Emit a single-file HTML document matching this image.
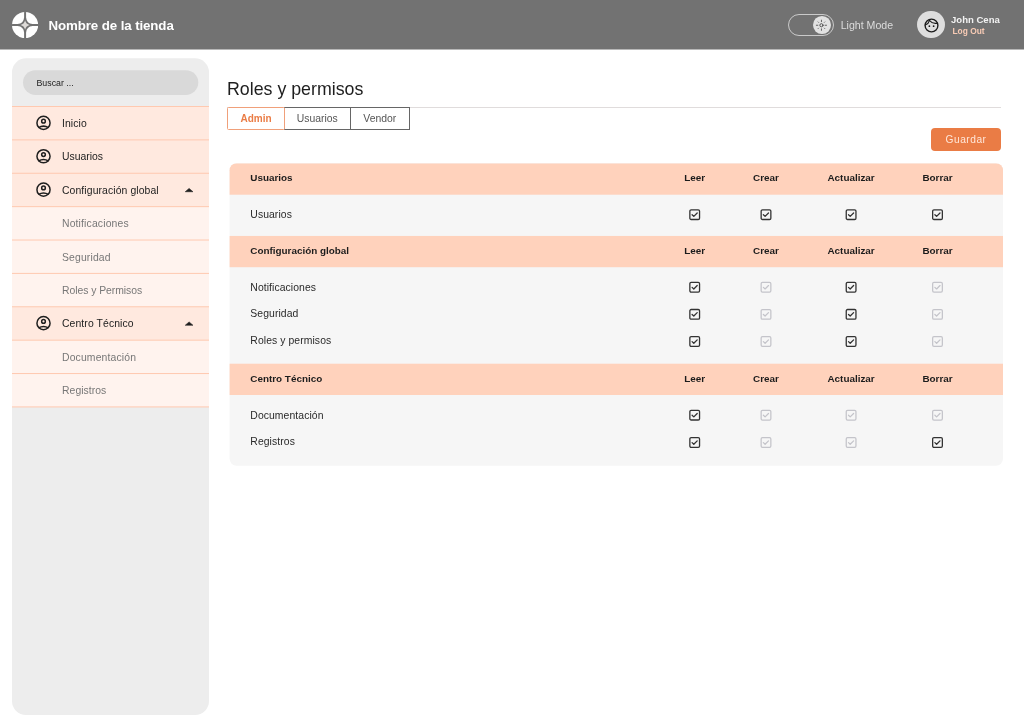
<!DOCTYPE html>
<html lang="es">
<head>
<meta charset="utf-8">
<title>Roles y permisos</title>
<style>
*{box-sizing:border-box;margin:0;padding:0}
html,body{width:1024px;height:728px;overflow:hidden;background:#fff}
body{font-family:"Liberation Sans",sans-serif;color:#222;position:relative}
.abs{position:absolute}
#root{position:absolute;left:0;top:0;width:1024px;height:728px;will-change:transform}
#hdr{position:absolute;left:0;top:0;width:1024px;height:49px;background:#727272;box-shadow:0 1px 0 #b8b8b8}
#logo{position:absolute;left:11.9px;top:11.9px;width:26.2px;height:26.2px}
#brand{position:absolute;left:48.5px;top:16.6px;font-size:13.3px;font-weight:bold;color:#fff;line-height:18px;white-space:nowrap;letter-spacing:-0.1px}
#toggle{position:absolute;left:788px;top:14px;width:46px;height:22.2px;border:1px solid #cacaca;border-radius:12px}
#knob{position:absolute;left:812.8px;top:16.05px;width:17.9px;height:17.9px;border-radius:50%;background:#e2e2e2}
#lm{position:absolute;left:840.7px;top:17px;font-size:10.6px;color:#dcdcdc;line-height:16px;white-space:nowrap}
#avatar{position:absolute;left:917.1px;top:10.7px;width:27.8px;height:27.8px;border-radius:50%;background:#dedede}
#uname{position:absolute;left:951px;top:12.5px;font-size:9.55px;font-weight:bold;color:#f2f2f2;line-height:13px;white-space:nowrap}
#logout{position:absolute;left:952.5px;top:25.5px;font-size:8.4px;font-weight:bold;color:#f8cbb5;line-height:11px;white-space:nowrap}
#side{position:absolute;left:12px;top:58px;width:197px;height:658px}
#search{position:absolute;left:11px;top:12px;width:175px;height:25px;font-size:8.8px;line-height:26.2px;padding-left:13.5px;color:#222}
.mi{position:absolute;left:0;width:197px;height:33.4px;font-size:10.4px;color:#222;letter-spacing:.1px}
.mi.sub{color:#777;letter-spacing:.15px}
.mi span{position:absolute;left:50px;top:.5px;line-height:33.4px;white-space:nowrap}
#title{position:absolute;left:227px;top:77.3px;font-size:17.8px;line-height:24px;color:#1e1e1e;white-space:nowrap}
#tline{position:absolute;left:227px;top:107px;width:773.5px;height:1px;background:#e0dcdc}
.tab{position:absolute;top:107px;height:23px;border:1px solid #666;background:#fff;font-size:10.4px;line-height:22.6px;text-align:center;color:#555}
#btn{position:absolute;left:931px;top:128px;width:69.5px;height:22.6px;border-radius:4px;background:#ea7c45;color:#ffe6d8;font-size:10.2px;line-height:23.6px;text-align:center;letter-spacing:.5px;padding-left:.5px}
#tbl{position:absolute;left:229px;top:163px;width:776px;height:304px}
.th{position:absolute;left:0;width:100%;height:0;font-weight:bold;font-size:9.9px;color:#1c1c1c}
.th b,.tr i{position:absolute;white-space:nowrap;font-style:normal}
.th b{top:-10.43px;line-height:14px}
.th .n{left:21.3px}
.c{transform:translateX(-50%)}
.tr{position:absolute;left:0;width:100%;height:0;font-size:10.4px;color:#2a2a2a;letter-spacing:.08px}
.tr i{left:21.3px;top:-7px;line-height:14px}
</style>
</head>
<body>
<div id="root">
<div id="hdr">
  <svg id="logo" viewBox="-13.1 -13.1 26.2 26.2">
    <defs><clipPath id="lc"><circle cx="0" cy="0" r="13.1"/></clipPath></defs>
    <circle cx="0" cy="0" r="13.1" fill="#fff"/>
    <path clip-path="url(#lc)" fill="#727272" d="M-1 -14 H1 V-7.5 Q1.5 -1.5 7.5 -1 H14 V1 H7.5 Q1.5 1.5 1 7.5 V14 H-1 V7.5 Q-1.5 1.5 -7.5 1 H-14 V-1 H-7.5 Q-1.5 -1.5 -1 -7.5Z"/>
    <path fill="#dedbd8" d="M0 -4.5 Q1 -1 4.5 0 Q1 1 0 4.5 Q-1 1 -4.5 0 Q-1 -1 0 -4.5Z"/>
  </svg>
  <div id="brand">Nombre de la tienda</div>
  <div id="toggle"></div>
  <div id="knob"></div>
  <svg class="abs" style="left:815px;top:19px;width:13px;height:13px" viewBox="0 0 13 13" fill="none" stroke="#444" stroke-width="0.8" stroke-linecap="round">
    <g transform="translate(6.45 6.25)">
    <circle cx="0" cy="0" r="1.6" stroke="#3c3c3c" stroke-width=".85"/>
    <path d="M0 -5.100v1.500M0 3.600v1.500M-5.100 0h1.500M3.600 0h1.500M-3.300 -3.300l.4 .4M2.900 2.900l.4 .4M-3.300 3.300l.4-.4M2.900 -2.900l.4-.4"/>
    </g>
  </svg>
  <div id="lm">Light Mode</div>
  <div id="avatar"></div>
  <svg class="abs" style="left:922.6px;top:16.8px;width:17px;height:17px" viewBox="0 0 24 24" fill="none" stroke="#1a1a1a" stroke-width="1.9" stroke-linecap="round">
    <circle cx="12" cy="12" r="9.05"/>
    <path d="M3.2 11.3C6.2 10.200 8.400 7.900 9.300 4.800" stroke-width="1.7"/>
    <path d="M9.600 5.300C11.800 8.200 15.400 9.700 20.300 8.800" stroke-width="1.7"/>
    <circle cx="9" cy="13" r="1.250" fill="#1a1a1a" stroke="none"/>
    <circle cx="15" cy="13" r="1.250" fill="#1a1a1a" stroke="none"/>
  </svg>
  <div id="uname">John Cena</div>
  <div id="logout">Log Out</div>
</div>
<div id="side">
  <svg class="abs" style="left:0;top:0;width:197px;height:658px" viewBox="0 0 197 658">
    <rect x="0" y=".3" width="197" height="656.8" rx="14" fill="#ededed"/>
    <rect x="11" y="12.200" width="175.300" height="24.800" rx="12.400" fill="#d9d9d9"/>
    <rect x="0" y="48.5" width="197" height="33.38" fill="#ffe9df"/>
    <rect x="0" y="81.88" width="197" height="33.38" fill="#ffe9df"/>
    <rect x="0" y="115.26" width="197" height="33.38" fill="#ffe9df"/>
    <rect x="0" y="148.64" width="197" height="33.38" fill="#fff3ee"/>
    <rect x="0" y="182.02" width="197" height="33.38" fill="#fff3ee"/>
    <rect x="0" y="215.4" width="197" height="33.38" fill="#fff3ee"/>
    <rect x="0" y="248.78" width="197" height="33.38" fill="#ffe9df"/>
    <rect x="0" y="282.16" width="197" height="33.38" fill="#fff3ee"/>
    <rect x="0" y="315.54" width="197" height="33.38" fill="#fff3ee"/>
    <rect x="0" y="48" width="197" height="1" fill="#ffc9b0"/>
    <rect x="0" y="81.38" width="197" height="1" fill="#ffc9b0"/>
    <rect x="0" y="114.76" width="197" height="1" fill="#ffc9b0"/>
    <rect x="0" y="148.14" width="197" height="1" fill="#ffc9b0"/>
    <rect x="0" y="181.52" width="197" height="1" fill="#ffc9b0"/>
    <rect x="0" y="214.9" width="197" height="1" fill="#ffc9b0"/>
    <rect x="0" y="248.28" width="197" height="1" fill="#ffc9b0"/>
    <rect x="0" y="281.66" width="197" height="1" fill="#ffc9b0"/>
    <rect x="0" y="315.04" width="197" height="1" fill="#ffc9b0"/>
    <rect x="0" y="348.42" width="197" height="1" fill="#ffc9b0"/>
    <use href="#usr" transform="translate(24 57.4) scale(.75)"/>
    <use href="#usr" transform="translate(24 90.78) scale(.75)"/>
    <use href="#usr" transform="translate(24 124.16) scale(.75)"/>
    <use href="#car" transform="translate(172.78 129.66) scale(.96)"/>
    <use href="#usr" transform="translate(24 257.68) scale(.75)"/>
    <use href="#car" transform="translate(172.78 263.18) scale(.96)"/>
  </svg>
  <div id="search">Buscar ...</div>
  <div class="mi" style="top:48.5px"><span>Inicio</span></div>
  <div class="mi" style="top:81.88px"><span style="letter-spacing:0px">Usuarios</span></div>
  <div class="mi" style="top:115.26px"><span>Configuración global</span></div>
  <div class="mi sub" style="top:148.64px"><span>Notificaciones</span></div>
  <div class="mi sub" style="top:182.02px"><span>Seguridad</span></div>
  <div class="mi sub" style="top:215.4px"><span style="letter-spacing:-0.05px">Roles y Permisos</span></div>
  <div class="mi" style="top:248.78px"><span>Centro Técnico</span></div>
  <div class="mi sub" style="top:282.16px"><span>Documentación</span></div>
  <div class="mi sub" style="top:315.54px"><span style="letter-spacing:0.05px">Registros</span></div>
</div>
<svg width="0" height="0" style="position:absolute">
  <defs>
    <g id="usr" fill="none" stroke="#1f1f1f" stroke-width="2">
      <circle cx="10" cy="10" r="8.75"/>
      <circle cx="10" cy="7.7" r="2.45"/>
      <path d="M3.4 16.3Q10 12.300 16.600 16.300"/>
    </g>
    <path id="car" d="M4.5 .75 L8.500 4.250 H.5Z" fill="#1f1f1f" stroke="#1f1f1f" stroke-width=".6" stroke-linejoin="round"/>
    <g id="cb" fill="none" stroke="#333" stroke-linecap="round" stroke-linejoin="round">
      <rect x=".75" y=".75" width="9.7" height="9.7" rx="1.3" stroke-width="1.3"/>
      <path d="M3 5.7l1.700 1.600 3.400-3.400" stroke-width="1.3"/>
    </g>
    <g id="cd" fill="none" stroke="#c4c4ca" stroke-linecap="round" stroke-linejoin="round">
      <rect x=".75" y=".75" width="9.7" height="9.7" rx="1.3" stroke-width="1.25"/>
      <path d="M3 5.7l1.7 1.6 3.4-3.4" stroke-width="1.25"/>
    </g>
  </defs>
</svg>
<div id="title">Roles y permisos</div>
<div id="tline"></div>
<div class="tab" style="left:284px;width:66.5px">Usuarios</div>
<div class="tab" style="left:349.500px;width:60.500px">Vendor</div>
<div class="tab" style="left:227px;width:58px;border-color:#f0a07a;border-radius:1.500px;color:#ea7c45;font-weight:bold;font-size:10px">Admin</div>
<div id="btn">Guardar</div>
<div id="tbl">
  <svg class="abs" style="left:0;top:0;width:776px;height:304px" viewBox="0 0 776 304">
    <defs><clipPath id="tc"><rect x="0.6" y="0.3" width="773.4" height="302.45" rx="7"/></clipPath></defs>
    <g clip-path="url(#tc)">
      <rect x="0" y="0" width="776" height="304" fill="#f6f6f6"/>
      <rect x="0" y="0.3" width="776" height="31.4" fill="#ffd2bc"/>
      <rect x="0" y="72.95" width="776" height="31.25" fill="#ffd2bc"/>
      <rect x="0" y="200.7" width="776" height="31.3" fill="#ffd2bc"/>
    </g>
    <use href="#cb" x="460.1" y="46.05"/>
    <use href="#cb" x="531.4" y="46.05"/>
    <use href="#cb" x="616.5" y="46.05"/>
    <use href="#cb" x="702.9" y="46.05"/>
    <use href="#cb" x="460.1" y="118.65"/>
    <use href="#cd" x="531.4" y="118.65"/>
    <use href="#cb" x="616.5" y="118.65"/>
    <use href="#cd" x="702.9" y="118.65"/>
    <use href="#cb" x="460.1" y="145.75"/>
    <use href="#cd" x="531.4" y="145.75"/>
    <use href="#cb" x="616.5" y="145.75"/>
    <use href="#cd" x="702.9" y="145.75"/>
    <use href="#cb" x="460.1" y="172.95"/>
    <use href="#cd" x="531.4" y="172.95"/>
    <use href="#cb" x="616.5" y="172.95"/>
    <use href="#cd" x="702.9" y="172.95"/>
    <use href="#cb" x="460.1" y="246.55"/>
    <use href="#cd" x="531.4" y="246.55"/>
    <use href="#cd" x="616.5" y="246.55"/>
    <use href="#cd" x="702.9" y="246.55"/>
    <use href="#cb" x="460.1" y="273.95"/>
    <use href="#cd" x="531.4" y="273.95"/>
    <use href="#cd" x="616.5" y="273.95"/>
    <use href="#cb" x="702.9" y="273.95"/>
  </svg>
  <div class="th" style="top:18.2px"><b class="n">Usuarios</b><b class="c" style="left:465.7px">Leer</b><b class="c" style="left:537px">Crear</b><b class="c" style="left:622.1px">Actualizar</b><b class="c" style="left:708.5px">Borrar</b></div>
  <div class="tr" style="top:51.5px"><i>Usuarios</i></div>
  <div class="th" style="top:91.2px"><b class="n">Configuración global</b><b class="c" style="left:465.7px">Leer</b><b class="c" style="left:537px">Crear</b><b class="c" style="left:622.1px">Actualizar</b><b class="c" style="left:708.5px">Borrar</b></div>
  <div class="tr" style="top:124.1px"><i style="top:-6.4px">Notificaciones</i></div>
  <div class="tr" style="top:151.2px"><i>Seguridad</i></div>
  <div class="tr" style="top:178.4px"><i>Roles y permisos</i></div>
  <div class="th" style="top:219.4px"><b class="n">Centro Técnico</b><b class="c" style="left:465.7px">Leer</b><b class="c" style="left:537px">Crear</b><b class="c" style="left:622.1px">Actualizar</b><b class="c" style="left:708.5px">Borrar</b></div>
  <div class="tr" style="top:252px"><i style="top:-6.4px">Documentación</i></div>
  <div class="tr" style="top:279.4px"><i>Registros</i></div>
</div>
</div>
</body>
</html>
